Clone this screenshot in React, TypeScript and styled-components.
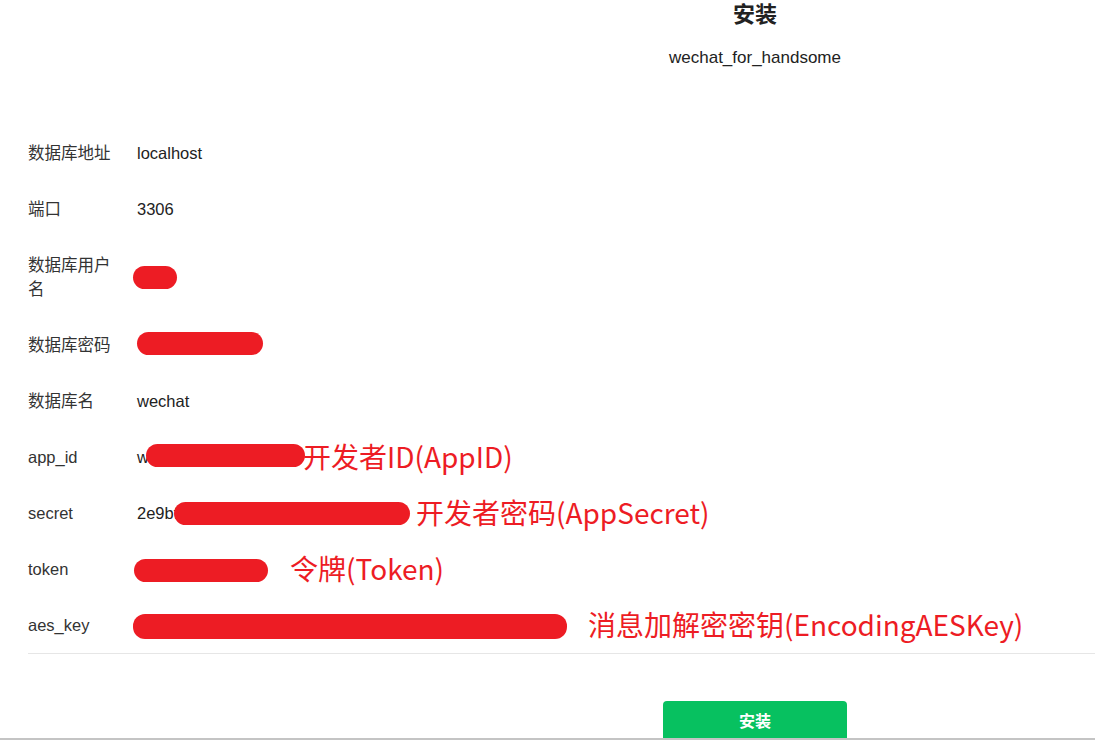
import styled, { createGlobalStyle } from "styled-components";

const GlobalStyle = createGlobalStyle`
  html, body {
    margin: 0;
    padding: 0;
    background: #fff;
    overflow: hidden;
  }
  body {
    font-family: "Liberation Sans", Arial, "Noto Sans CJK SC", sans-serif;
    color: #333;
  }
`;

const Page = styled.div`
  box-sizing: border-box;
  height: 740px;
  padding-left: 28px;
  border-bottom: 2px solid #c4c4c4;
  overflow: hidden;
`;
const Content = styled.div`
  width: 1454px;
`;
const Header = styled.header`
  display: flex;
  flex-direction: column;
  align-items: center;
  height: 125px;
`;
const Title = styled.h1`
  margin: 0;
  font-size: 22px;
  line-height: 30px;
  font-weight: bold;
  color: #222;
`;
const SubTitle = styled.p`
  margin: 16px 0 0;
  font-size: 17px;
  line-height: 24px;
  color: #222;
`;
const Form = styled.form`
  border-bottom: 1px solid #e6e6e6;
`;
type TRow = { $tall?: boolean };
const Row = styled.div<TRow>`
  display: flex;
  align-items: center;
  height: ${({ $tall }) => ($tall ? "80px" : "56px")};
`;
const Label = styled.label`
  width: 92px;
  margin-right: 17px;
  font-size: 16.5px;
  line-height: 24px;
  color: #333;
`;
const Value = styled.div`
  position: relative;
  flex: 1;
  height: 24px;
  font-size: 16.5px;
  line-height: 24px;
  color: #222;
`;
type TMark = { $left: number; $width: number; $top?: number; $height?: number };
const Mark = styled.span<TMark>`
  position: absolute;
  left: ${({ $left }) => $left}px;
  top: ${({ $top }) => $top ?? 0}px;
  width: ${({ $width }) => $width}px;
  height: ${({ $height }) => $height ?? 23}px;
  background: #ed1c24;
  border-radius: 12px;
`;
type TNote = { $left: number };
const Note = styled.span<TNote>`
  position: absolute;
  left: ${({ $left }) => $left}px;
  top: -6px;
  font-family: "Noto Sans CJK SC", "Liberation Sans", sans-serif;
  font-size: 28px;
  line-height: 34px;
  color: #ed1c24;
  white-space: nowrap;
`;
const Footer = styled.div`
  display: flex;
  justify-content: center;
  padding-top: 47px;
`;
const SubmitButton = styled.button`
  width: 184px;
  height: 44px;
  border: none;
  border-radius: 4px;
  background: #07c160;
  color: #fff;
  font-family: "Noto Sans CJK SC", sans-serif;
  font-size: 16px;
  font-weight: bold;
  padding: 0 0 6px;
  cursor: pointer;
`;

type TField = {
  label: string;
  value?: string;
  tall?: boolean;
  mark?: TMark;
  note?: { text: string; left: number };
};

const fields: TField[] = [
  { label: "数据库地址", value: "localhost" },
  { label: "端口", value: "3306" },
  { label: "数据库用户名", tall: true, mark: { $left: -4, $width: 44, $top: 1 } },
  { label: "数据库密码", mark: { $left: 0, $width: 126, $top: -1 } },
  { label: "数据库名", value: "wechat" },
  {
    label: "app_id",
    value: "w",
    mark: { $left: 9, $width: 159, $top: -1 },
    note: { text: "开发者ID(AppID)", left: 166 },
  },
  {
    label: "secret",
    value: "2e9bf",
    mark: { $left: 37, $width: 236, $top: 1 },
    note: { text: "开发者密码(AppSecret)", left: 279 },
  },
  {
    label: "token",
    mark: { $left: -3, $width: 134, $top: 2 },
    note: { text: "令牌(Token)", left: 153 },
  },
  {
    label: "aes_key",
    mark: { $left: -4, $width: 434, $top: 1, $height: 25 },
    note: { text: "消息加解密密钥(EncodingAESKey)", left: 451 },
  },
];

export default function App() {
  return (
    <>
      <GlobalStyle />
      <Page>
        <Content>
          <Header>
            <Title>安装</Title>
            <SubTitle>wechat_for_handsome</SubTitle>
          </Header>
          <Form onSubmit={(e) => e.preventDefault()}>
            {fields.map((f) => (
              <Row key={f.label} $tall={f.tall}>
                <Label>{f.label}</Label>
                <Value>
                  {f.value}
                  {f.mark && <Mark {...f.mark} />}
                  {f.note && <Note $left={f.note.left}>{f.note.text}</Note>}
                </Value>
              </Row>
            ))}
          </Form>
          <Footer>
            <SubmitButton type="button">安装</SubmitButton>
          </Footer>
        </Content>
      </Page>
    </>
  );
}
